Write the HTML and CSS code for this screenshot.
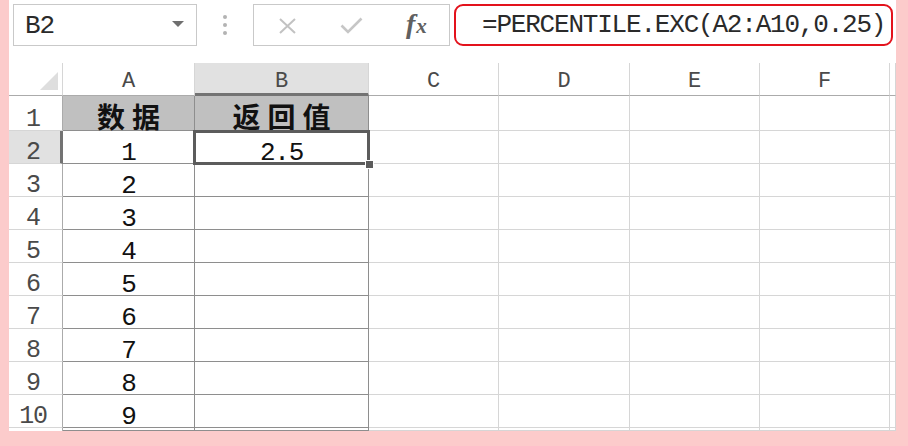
FILE: index.html
```html
<!DOCTYPE html>
<html lang="zh">
<head>
<meta charset="utf-8">
<title>PERCENTILE.EXC</title>
<link rel="stylesheet" href="styles.css">
</head>
<body>
<div class="frame">
  <div class="fbar">
    <div class="namebox">
      <span class="ref">B2</span>
      <svg class="caret" width="12" height="6" viewBox="0 0 12 6"><path d="M0 0H12L6 6Z" fill="#6f6f6f"/></svg>
    </div>
    <div class="dots"><i></i><i></i><i></i></div>
    <div class="btns">
      <svg class="ico-x" width="17" height="16" viewBox="0 0 17 16"><path d="M1 1L16 15M16 1L1 15" stroke="#c2c2c2" stroke-width="2" fill="none"/></svg>
      <svg class="ico-ok" width="23" height="17" viewBox="0 0 23 17"><path d="M1.5 8.5L8 15L21.5 1.5" stroke="#c6c6c6" stroke-width="2.6" fill="none"/></svg>
      <span class="fx"><span class="f">f</span><span class="x">x</span></span>
    </div>
    <div class="formula">=PERCENTILE.EXC(A2:A10,0.25)</div>
  </div>

  <div class="sheet">
    <!-- header row -->
    <div class="cell corner"><svg width="54" height="33" viewBox="0 0 54 33"><path d="M31 27L49 9V27Z" fill="#dedede"/></svg></div>
    <div class="cell hd">A</div>
    <div class="cell hd sel">B</div>
    <div class="cell hd">C</div>
    <div class="cell hd">D</div>
    <div class="cell hd">E</div>
    <div class="cell hd">F</div>
    <div class="cell hd"></div>

    <!-- row 1 -->
    <div class="cell rh r1">1</div>
    <div class="cell t th">数据</div>
    <div class="cell t th">返回值</div>
    <div class="cell"></div><div class="cell"></div><div class="cell"></div><div class="cell"></div><div class="cell"></div>

    <!-- row 2 -->
    <div class="cell rh sel">2</div>
    <div class="cell t num">1</div>
    <div class="cell t num active">2.5</div>
    <div class="cell"></div><div class="cell"></div><div class="cell"></div><div class="cell"></div><div class="cell"></div>

    <div class="cell rh">3</div>
    <div class="cell t num">2</div>
    <div class="cell t"></div>
    <div class="cell"></div><div class="cell"></div><div class="cell"></div><div class="cell"></div><div class="cell"></div>

    <div class="cell rh">4</div>
    <div class="cell t num">3</div>
    <div class="cell t"></div>
    <div class="cell"></div><div class="cell"></div><div class="cell"></div><div class="cell"></div><div class="cell"></div>

    <div class="cell rh">5</div>
    <div class="cell t num">4</div>
    <div class="cell t"></div>
    <div class="cell"></div><div class="cell"></div><div class="cell"></div><div class="cell"></div><div class="cell"></div>

    <div class="cell rh">6</div>
    <div class="cell t num">5</div>
    <div class="cell t"></div>
    <div class="cell"></div><div class="cell"></div><div class="cell"></div><div class="cell"></div><div class="cell"></div>

    <div class="cell rh">7</div>
    <div class="cell t num">6</div>
    <div class="cell t"></div>
    <div class="cell"></div><div class="cell"></div><div class="cell"></div><div class="cell"></div><div class="cell"></div>

    <div class="cell rh">8</div>
    <div class="cell t num">7</div>
    <div class="cell t"></div>
    <div class="cell"></div><div class="cell"></div><div class="cell"></div><div class="cell"></div><div class="cell"></div>

    <div class="cell rh">9</div>
    <div class="cell t num">8</div>
    <div class="cell t"></div>
    <div class="cell"></div><div class="cell"></div><div class="cell"></div><div class="cell"></div><div class="cell"></div>

    <div class="cell rh">10</div>
    <div class="cell t num">9</div>
    <div class="cell t"></div>
    <div class="cell"></div><div class="cell"></div><div class="cell"></div><div class="cell"></div><div class="cell"></div>

    <!-- row 11 (partially visible) -->
    <div class="cell rh"></div>
    <div class="cell t"></div>
    <div class="cell t"></div>
    <div class="cell"></div><div class="cell"></div><div class="cell"></div><div class="cell"></div><div class="cell"></div>
  </div>
</div>
</body>
</html>
```

FILE: styles.css
```css
html, body {
  margin: 0;
  padding: 0;
  background: #fccbcb;
}

.frame {
  margin-left: 9px;
  width: 887px;
  height: 431px;
  background: #ffffff;
  overflow: hidden;
  font-family: "Liberation Mono", "Noto Sans CJK SC", monospace;
  color: #1e1e1e;
}

/* ---------- formula bar ---------- */
.fbar {
  display: flex;
  padding: 4px 0 0 4px;
  height: 42px;
}

.namebox {
  box-sizing: border-box;
  width: 184px;
  height: 42px;
  border: 1px solid #c9c9c9;
  display: flex;
  align-items: center;
  justify-content: space-between;
  padding: 2px 12px 0 11px;
  font-size: 26px;
  letter-spacing: -1.2px;
  color: #2a2a2a;
}

.namebox .caret {
  margin-top: -4px;
}

.dots {
  width: 56px;
  display: flex;
  flex-direction: column;
  align-items: center;
  justify-content: center;
  gap: 4px;
}

.dots i {
  display: block;
  width: 4px;
  height: 4px;
  border-radius: 50%;
  background: #b3b3b3;
}

.btns {
  box-sizing: border-box;
  width: 197px;
  height: 42px;
  border: 1px solid #c9c9c9;
  display: flex;
  align-items: center;
  padding-left: 25px;
}

.ico-x {
  margin-top: 1px;
}

.ico-ok {
  margin-left: 44px;
  margin-top: 1px;
}

.fx {
  margin-left: 43px;
  font-family: "Liberation Serif", serif;
  font-style: italic;
  font-weight: bold;
  color: #606060;
  display: flex;
  align-items: baseline;
  margin-top: -2px;
}

.fx .f {
  font-size: 28px;
}

.fx .x {
  font-size: 21px;
  margin-left: 1px;
}

.formula {
  margin-left: 4px;
  box-sizing: border-box;
  width: 439px;
  height: 42px;
  border: 2.5px solid #e3121c;
  border-radius: 9px;
  padding-left: 26px;
  display: flex;
  align-items: center;
  font-size: 26px;
  letter-spacing: -1.2px;
  color: #2a2a2a;
  white-space: nowrap;
}

/* ---------- sheet grid ---------- */
.sheet {
  margin-top: 17px;
  display: grid;
  grid-template-columns: 54px 132px 174px 130px 131px 130px 130px 6px;
  grid-template-rows: 33px 35px repeat(9, 33px) 3px;
  height: 368px;
  overflow: hidden;
}

.cell {
  box-sizing: border-box;
  border-right: 1px solid #d6d6d6;
  border-bottom: 1px solid #d6d6d6;
  font-size: 26px;
  letter-spacing: -1.2px;
  line-height: 24px;
  text-align: center;
  white-space: nowrap;
}

.corner {
  border-bottom-color: #ababab;
}

.corner svg {
  display: block;
}

.hd {
  border-bottom-color: #ababab;
  color: #4a4a4a;
  font-size: 22px;
  letter-spacing: 0;
  padding-top: 9px;
  line-height: 20px;
}

.hd.sel {
  background: #e1e1e1;
  border-bottom: 3px solid #737373;
}

.rh {
  border-right-color: #ababab;
  color: #4a4a4a;
  font-size: 25px;
  padding-top: 10px;
  padding-right: 5px;
}

.rh.r1 {
  padding-top: 12px;
}

.rh.sel {
  background: #e1e1e1;
  border-right: 3px solid #737373;
  padding-right: 3px;
}

.t {
  border-right-color: #8e8e8e;
  border-bottom-color: #8e8e8e;
}

.th {
  background: #c0c0c0;
  font-family: "Noto Sans CJK SC", sans-serif;
  font-weight: 700;
  font-size: 28px;
  letter-spacing: 7px;
  padding-left: 7px;
  line-height: 28px;
  padding-top: 6px;
  color: #111;
}

.num {
  padding-top: 10px;
  color: #111;
}

.active {
  position: relative;
}

.active::after {
  content: "";
  position: absolute;
  left: -2px;
  top: -1px;
  right: -2px;
  bottom: -2px;
  border: 3px solid #5c5c5c;
  z-index: 2;
}

.active::before {
  content: "";
  position: absolute;
  right: -6px;
  bottom: -6px;
  width: 7px;
  height: 7px;
  background: #5c5c5c;
  border: 1px solid #ffffff;
  z-index: 3;
}
```
